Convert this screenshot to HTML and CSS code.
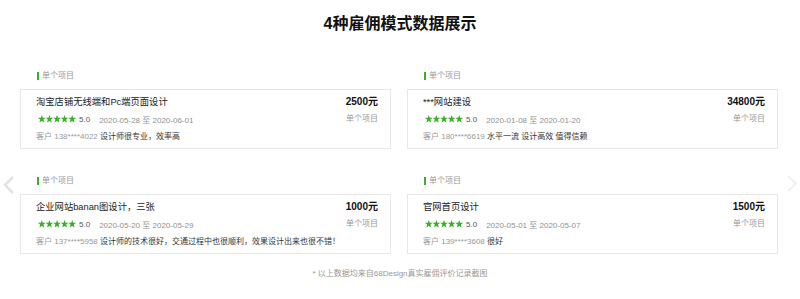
FILE: index.html
```html
<!DOCTYPE html>
<html lang="zh-CN">
<head>
<meta charset="utf-8">
<title>4种雇佣模式数据展示</title>
<link rel="stylesheet" href="styles.css">
</head>
<body>
<h1 class="title">4种雇佣模式数据展示</h1>
<div class="slider">
  <svg class="arrow prev" width="14" height="18" viewBox="0 0 14 18"><polyline points="11,1 3,9 11,17" fill="none" stroke="#e2e2e2" stroke-width="2.5"/></svg>
  <div class="grid">
    <div class="group">
      <div class="label"><span class="bar"></span>单个项目</div>
      <div class="card">
        <div class="info">
          <div class="name">淘宝店铺无线端和Pc端页面设计</div>
          <div class="meta"><svg class="stars" width="38" height="8" viewBox="0 0 38 8"><g fill="#3dae2b"><polygon points="3.8,0 4.8,2.7 7.7,2.8 5.4,4.6 6.2,7.6 3.8,5.9 1.4,7.6 2.2,4.6 -0.1,2.8 2.8,2.7"/><polygon transform="translate(7.6 0)" points="3.8,0 4.8,2.7 7.7,2.8 5.4,4.6 6.2,7.6 3.8,5.9 1.4,7.6 2.2,4.6 -0.1,2.8 2.8,2.7"/><polygon transform="translate(15.2 0)" points="3.8,0 4.8,2.7 7.7,2.8 5.4,4.6 6.2,7.6 3.8,5.9 1.4,7.6 2.2,4.6 -0.1,2.8 2.8,2.7"/><polygon transform="translate(22.8 0)" points="3.8,0 4.8,2.7 7.7,2.8 5.4,4.6 6.2,7.6 3.8,5.9 1.4,7.6 2.2,4.6 -0.1,2.8 2.8,2.7"/><polygon transform="translate(30.4 0)" points="3.8,0 4.8,2.7 7.7,2.8 5.4,4.6 6.2,7.6 3.8,5.9 1.4,7.6 2.2,4.6 -0.1,2.8 2.8,2.7"/></g></svg><span class="score">5.0</span><span class="date">2020-05-28 至 2020-06-01</span></div>
          <div class="review"><span class="who">客户 138****4022</span> 设计师很专业，效率高</div>
        </div>
        <div class="side">
          <div class="price">2500元</div>
          <div class="type">单个项目</div>
        </div>
      </div>
    </div>
    <div class="group">
      <div class="label"><span class="bar"></span>单个项目</div>
      <div class="card">
        <div class="info">
          <div class="name">***网站建设</div>
          <div class="meta"><svg class="stars" width="38" height="8" viewBox="0 0 38 8"><g fill="#3dae2b"><polygon points="3.8,0 4.8,2.7 7.7,2.8 5.4,4.6 6.2,7.6 3.8,5.9 1.4,7.6 2.2,4.6 -0.1,2.8 2.8,2.7"/><polygon transform="translate(7.6 0)" points="3.8,0 4.8,2.7 7.7,2.8 5.4,4.6 6.2,7.6 3.8,5.9 1.4,7.6 2.2,4.6 -0.1,2.8 2.8,2.7"/><polygon transform="translate(15.2 0)" points="3.8,0 4.8,2.7 7.7,2.8 5.4,4.6 6.2,7.6 3.8,5.9 1.4,7.6 2.2,4.6 -0.1,2.8 2.8,2.7"/><polygon transform="translate(22.8 0)" points="3.8,0 4.8,2.7 7.7,2.8 5.4,4.6 6.2,7.6 3.8,5.9 1.4,7.6 2.2,4.6 -0.1,2.8 2.8,2.7"/><polygon transform="translate(30.4 0)" points="3.8,0 4.8,2.7 7.7,2.8 5.4,4.6 6.2,7.6 3.8,5.9 1.4,7.6 2.2,4.6 -0.1,2.8 2.8,2.7"/></g></svg><span class="score">5.0</span><span class="date">2020-01-08 至 2020-01-20</span></div>
          <div class="review"><span class="who">客户 180****6619</span> 水平一流 设计高效 值得信赖</div>
        </div>
        <div class="side">
          <div class="price">34800元</div>
          <div class="type">单个项目</div>
        </div>
      </div>
    </div>
    <div class="group">
      <div class="label"><span class="bar"></span>单个项目</div>
      <div class="card">
        <div class="info">
          <div class="name">企业网站banan图设计，三张</div>
          <div class="meta"><svg class="stars" width="38" height="8" viewBox="0 0 38 8"><g fill="#3dae2b"><polygon points="3.8,0 4.8,2.7 7.7,2.8 5.4,4.6 6.2,7.6 3.8,5.9 1.4,7.6 2.2,4.6 -0.1,2.8 2.8,2.7"/><polygon transform="translate(7.6 0)" points="3.8,0 4.8,2.7 7.7,2.8 5.4,4.6 6.2,7.6 3.8,5.9 1.4,7.6 2.2,4.6 -0.1,2.8 2.8,2.7"/><polygon transform="translate(15.2 0)" points="3.8,0 4.8,2.7 7.7,2.8 5.4,4.6 6.2,7.6 3.8,5.9 1.4,7.6 2.2,4.6 -0.1,2.8 2.8,2.7"/><polygon transform="translate(22.8 0)" points="3.8,0 4.8,2.7 7.7,2.8 5.4,4.6 6.2,7.6 3.8,5.9 1.4,7.6 2.2,4.6 -0.1,2.8 2.8,2.7"/><polygon transform="translate(30.4 0)" points="3.8,0 4.8,2.7 7.7,2.8 5.4,4.6 6.2,7.6 3.8,5.9 1.4,7.6 2.2,4.6 -0.1,2.8 2.8,2.7"/></g></svg><span class="score">5.0</span><span class="date">2020-05-20 至 2020-05-29</span></div>
          <div class="review"><span class="who">客户 137****5958</span> 设计师的技术很好，交通过程中也很顺利，效果设计出来也很不错！</div>
        </div>
        <div class="side">
          <div class="price">1000元</div>
          <div class="type">单个项目</div>
        </div>
      </div>
    </div>
    <div class="group">
      <div class="label"><span class="bar"></span>单个项目</div>
      <div class="card">
        <div class="info">
          <div class="name">官网首页设计</div>
          <div class="meta"><svg class="stars" width="38" height="8" viewBox="0 0 38 8"><g fill="#3dae2b"><polygon points="3.8,0 4.8,2.7 7.7,2.8 5.4,4.6 6.2,7.6 3.8,5.9 1.4,7.6 2.2,4.6 -0.1,2.8 2.8,2.7"/><polygon transform="translate(7.6 0)" points="3.8,0 4.8,2.7 7.7,2.8 5.4,4.6 6.2,7.6 3.8,5.9 1.4,7.6 2.2,4.6 -0.1,2.8 2.8,2.7"/><polygon transform="translate(15.2 0)" points="3.8,0 4.8,2.7 7.7,2.8 5.4,4.6 6.2,7.6 3.8,5.9 1.4,7.6 2.2,4.6 -0.1,2.8 2.8,2.7"/><polygon transform="translate(22.8 0)" points="3.8,0 4.8,2.7 7.7,2.8 5.4,4.6 6.2,7.6 3.8,5.9 1.4,7.6 2.2,4.6 -0.1,2.8 2.8,2.7"/><polygon transform="translate(30.4 0)" points="3.8,0 4.8,2.7 7.7,2.8 5.4,4.6 6.2,7.6 3.8,5.9 1.4,7.6 2.2,4.6 -0.1,2.8 2.8,2.7"/></g></svg><span class="score">5.0</span><span class="date">2020-05-01 至 2020-05-07</span></div>
          <div class="review"><span class="who">客户 139****3608</span> 很好</div>
        </div>
        <div class="side">
          <div class="price">1500元</div>
          <div class="type">单个项目</div>
        </div>
      </div>
    </div>
  </div>
  <svg class="arrow next" width="12" height="17" viewBox="0 0 12 17"><polyline points="2,1 10,8.5 2,16" fill="none" stroke="#f0f0f0" stroke-width="2"/></svg>
</div>
<p class="note">* 以上数据均来自68Design真实雇佣评价记录截图</p>
</body>
</html>
```

FILE: styles.css
```css
* { box-sizing: border-box; }

body {
  margin: 0;
  background: #fff;
  font-family: "Liberation Sans", "Noto Sans CJK SC", sans-serif;
  color: #333;
}

.title {
  margin: 0;
  padding-top: 12px;
  font-size: 16px;
  line-height: 24px;
  font-weight: bold;
  color: #111;
  text-align: center;
}

.slider {
  position: relative;
  margin-top: 34px;
}

.arrow { position: absolute; }
.arrow.prev { left: 2px; top: 106px; }
.arrow.next { left: 786px; top: 105px; }

.grid {
  margin-left: 20px;
  width: 758px;
  display: grid;
  grid-template-columns: 371px 371px;
  column-gap: 16px;
  row-gap: 26px;
}

.label {
  display: flex;
  align-items: center;
  padding-left: 17px;
  height: 12px;
  font-size: 8px;
  line-height: 12px;
  color: #999;
}

.bar {
  display: inline-block;
  width: 2px;
  height: 8px;
  background: #3cae2c;
  margin-right: 3px;
}

.card {
  margin-top: 7px;
  height: 60px;
  border: 1px solid #e8e8e8;
  padding: 5px 12px 0 15px;
  display: flex;
  justify-content: space-between;
}

.info { display: flex; flex-direction: column; }

.name {
  font-size: 9.3px;
  line-height: 14px;
  color: #222;
}

.meta {
  margin-top: 3px;
  height: 14px;
  display: flex;
  align-items: center;
  font-size: 8px;
  color: #8f8f8f;
}

.stars { display: block; margin-left: 2px; }

.score { color: #555; margin-left: 3px; }
.date { margin-left: 9px; }

.review {
  margin-top: 4px;
  font-size: 8px;
  line-height: 14px;
  color: #333;
}

.who { color: #999; }

.side {
  text-align: right;
  display: flex;
  flex-direction: column;
}

.price {
  font-size: 10px;
  line-height: 14px;
  font-weight: bold;
  color: #111;
}

.type {
  margin-top: 3px;
  font-size: 8px;
  line-height: 14px;
  color: #999;
}

.note {
  margin: 14px 0 0;
  text-align: center;
  font-size: 8px;
  line-height: 12px;
  color: #999;
}
```
